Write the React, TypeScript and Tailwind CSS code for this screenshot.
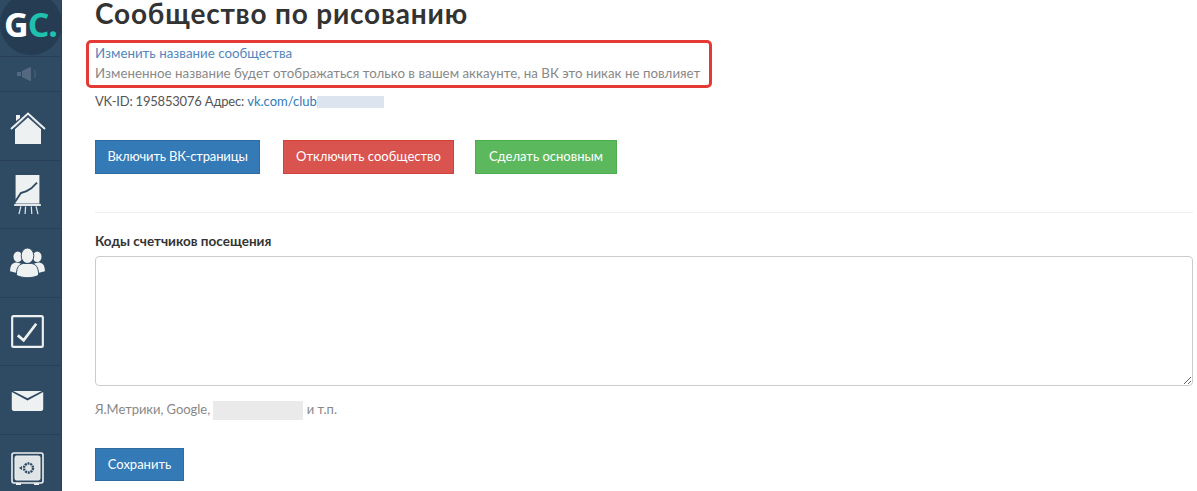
import React from 'react';

const rowBorder = 'border-b border-[#283f55] flex items-center justify-center pr-[6px]';

const App: React.FC = () => {
  return (
    <div className="flex h-[491px] w-[1197px] overflow-hidden bg-white font-['Lato','Open_Sans',sans-serif] text-[13px] text-[#555]">
      <aside className="w-[62px] shrink-0 border-r border-[#2a4156] bg-[#2f4a63] flex flex-col">
        <div className="border-b border-[#283f55] flex items-center justify-center h-[57px] overflow-hidden">
          <div className="w-[62px] h-[62px] -mt-[8px] shrink-0 rounded-full bg-[#263c53] flex items-center justify-center font-['Open_Sans',sans-serif] font-bold text-[34px] tracking-[-1px] leading-none">
            <span className="text-white">G</span>
            <span className="text-[#1fc1ae]">C.</span>
          </div>
        </div>
        <div className={`${rowBorder} h-[35px]`}>
          <svg width="22" height="16" viewBox="0 0 22 16" fill="#52697f">
            <rect x="0" y="6" width="4" height="4" />
            <path d="M5 5 L13 1 C14 1 14 2 14 2 V14 C14 15 13 15 13 15 L5 11 Z" />
            <path d="M17 4 Q19.5 8 17 12" fill="none" stroke="#465e75" strokeWidth="1.4" />
          </svg>
        </div>
        <div className={`${rowBorder} h-[69px]`}>
          <svg width="36" height="34" viewBox="0 0 36 34" fill="#eef1f2" className="mt-[3px]">
            <path d="M5 16 L18 5 L31 16 V33 H5 Z" />
            <path d="M1 18 L18 2.5 L35 18" fill="none" stroke="#eef1f2" strokeWidth="2" />
            <path d="M6 10 V4 H10 V7 Z" />
            <path d="M2.5 19.5 L18 5.5 L33.5 19.5" fill="none" stroke="#2f4a63" strokeWidth="1.4" />
          </svg>
        </div>
        <div className={`${rowBorder} h-[68px]`}>
          <svg width="27" height="40" viewBox="0 0 28 42" fill="none">
            <rect x="1.5" y="0" width="25" height="30" fill="#eef1f2" />
            <path d="M1 28 L7 19 L13 17 L18 14 L24 8" stroke="#2f4a63" strokeWidth="2" />
            <path d="M0 31.5 H28" stroke="#eef1f2" strokeWidth="2" />
            <path d="M7 33 L5 41 M12 33 L11.5 41 M18 33 L18.5 41 M23 33 L25 41" stroke="#dfe4e7" strokeWidth="1.3" />
          </svg>
        </div>
        <div className={`${rowBorder} h-[69px]`}>
          <svg width="35" height="30" viewBox="0 0 36 31" fill="#eef1f2">
            <ellipse cx="8" cy="9" rx="4.5" ry="5.5" />
            <ellipse cx="28" cy="9" rx="4.5" ry="5.5" />
            <path d="M0 24 C0 17 3 15 7 15 L11 16 L8 26 Z" />
            <path d="M36 24 C36 17 33 15 29 15 L25 16 L28 26 Z" />
            <ellipse cx="18" cy="8" rx="6.5" ry="8" stroke="#2f4a63" strokeWidth="1" />
            <path d="M6.5 28 C6.5 19 10 16.5 14 16 H22 C26 16.5 29.5 19 29.5 28 C25 31.5 11 31.5 6.5 28 Z" stroke="#2f4a63" strokeWidth="1" />
          </svg>
        </div>
        <div className={`${rowBorder} h-[68px]`}>
          <svg width="33" height="33" viewBox="0 0 34 34" fill="none">
            <rect x="1.2" y="1.2" width="31.6" height="31.6" rx="1.5" stroke="#eef1f2" strokeWidth="2.2" />
            <path d="M7 21 L13 26 L26 9" stroke="#eef1f2" strokeWidth="2.8" />
          </svg>
        </div>
        <div className={`${rowBorder} h-[69px]`}>
          <svg width="33" height="20" viewBox="0 0 33 21" className="mt-[2px]">
            <path d="M0 1 L16.5 10 L33 1 V19 C33 20 32 21 31 21 H2 C1 21 0 20 0 19 Z" fill="#eef1f2" />
            <path d="M1.5 0 H31.5 L16.5 7.5 Z" fill="#eef1f2" />
          </svg>
        </div>
        <div className="flex-1 flex items-start justify-center pt-[17px] pr-[6px]">
          <svg width="33" height="34" viewBox="0 0 33 34" fill="none">
            <rect x="1" y="1" width="31" height="30" rx="2" stroke="#eef1f2" strokeWidth="1.6" />
            <rect x="4" y="4" width="25" height="24" rx="1.5" fill="#dfe4e7" stroke="#eef1f2" />
            <circle cx="17.5" cy="16" r="4.5" stroke="#2f4a63" strokeWidth="2.4" strokeDasharray="2 0.8" />
            <path d="M8 16 L11 14 V18 Z" fill="#2f4a63" />
            <path d="M5 32 H10 M23 32 H28" stroke="#eef1f2" strokeWidth="2" />
          </svg>
        </div>
      </aside>

      <main className="flex-1 min-w-0 pl-[33px] pr-[4px]">
        <h1 className="text-[28px] leading-[26px] font-bold text-[#333] tracking-[0.8px] whitespace-nowrap">
          Сообщество по рисованию
        </h1>

        <div className="mt-[14px] -ml-[9px] w-[626px] h-[48px] rounded-[5px] border-[3px] border-[#e53935] pl-[6px] leading-[20px] whitespace-nowrap text-[13.3px] tracking-[0.02px]">
          <a className="block text-[#5286bd]">Изменить название сообщества</a>
          <p className="text-[#888]">Измененное название будет отображаться только в вашем аккаунте, на ВК это никак не повлияет</p>
        </div>

        <div className="mt-[4px] flex items-center h-[20px] whitespace-nowrap">
          <span className="tracking-[-0.2px]">VK-ID: 195853076 Адрес:&nbsp;</span>
          <a className="text-[#337ab7]">vk.com/club</a>
          <span className="w-[67px] h-[12px] bg-[#dce4ef]" />
        </div>

        <div className="mt-[28px] flex gap-[23px]">
          <button className="h-[34px] w-[165px] bg-[#337ab7] border border-[#2e6da4] text-white text-center tracking-[-0.15px]">Включить ВК-страницы</button>
          <button className="h-[34px] w-[171px] bg-[#d9534f] border border-[#d43f3a] text-white text-center">Отключить сообщество</button>
          <button className="h-[34px] w-[142px] -ml-[2px] bg-[#5cb85c] border border-[#4cae4c] text-white text-center">Сделать основным</button>
        </div>

        <hr className="mt-[38px] border-t border-[#eeeeee]" />

        <label className="block mt-[19px] font-bold text-[#333] leading-[19px] text-[13.5px]">Коды счетчиков посещения</label>
        <textarea
          readOnly
          className="block mt-[5px] w-full h-[130px] rounded-[4px] border border-[#ccc] bg-white outline-none"
        />

        <div className="mt-[14px] flex items-center h-[20px] text-[#888] whitespace-nowrap">
          <span className="tracking-[-0.05px]">Я.Метрики, Google,&nbsp;</span>
          <span className="w-[90px] h-[19px] bg-[#eaeaea]" />
          <span>&nbsp;и т.п.</span>
        </div>

        <button className="mt-[28px] block h-[33px] w-[89px] bg-[#337ab7] border border-[#2e6da4] text-white text-center">Сохранить</button>
      </main>
    </div>
  );
};

export default App;
